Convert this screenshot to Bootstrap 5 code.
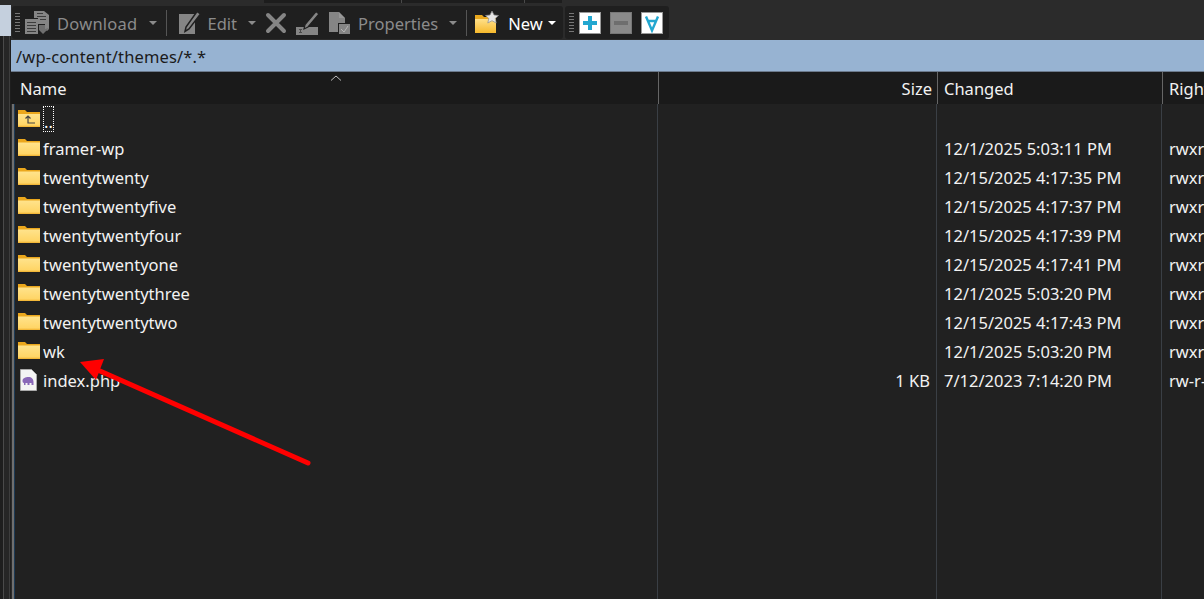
<!DOCTYPE html>
<html lang="en">
<head>
<meta charset="utf-8">
<title>Remote files</title>
<link href="https://cdn.jsdelivr.net/npm/bootstrap@5.3.0/dist/css/bootstrap.min.css" rel="stylesheet">
<style>
html,body{height:100%;margin:0}
body{background:#2b2b2b;font-family:"Noto Sans","Open Sans",sans-serif;font-size:16.5px;overflow:hidden;color:#f2f2f2}
.shell{height:599px;position:relative}
.rail{width:11px;flex:none}
.rail-top{height:31px;margin-top:5px;background:#c5d0de}
.rail-low{flex:1;background:linear-gradient(90deg,#1e1e1e 0 3px,#4a4a4a 3px 4px,#262626 4px 9px,#3d3d3d 9px 10px,#1e1e1e 10px)}
.topstrip{height:6px}
.ts-a{width:253px;height:3px}
.ts-b{width:138px;height:3px;background:#1d1d1d;border-right:1px solid #4a4a4a}
.ts-c{width:123px;height:3px;background:#1d1d1d;border-right:1px solid #4a4a4a}
.ts-d{width:37px;height:3px;background:#1d1d1d}
.tool-row{height:34px;gap:2px;padding-left:1px}
.panel{background:#1f1f1f;border-radius:3px;height:33px}
.panel-a{width:551px;padding-left:3px}
.panel-b{width:104px;padding-left:4px}
.grip{width:5px;height:20px;flex:none;background:repeating-linear-gradient(#777 0 1px,transparent 1px 3px)}
.ttext{color:#8b8b8b;line-height:1;margin-top:3px}
.ttext-wide{letter-spacing:.25px}
.ttext-on{color:#fff}
.caret-s{width:0;height:0;border-left:4px solid transparent;border-right:4px solid transparent;border-top:4px solid #8b8b8b;flex:none}
.caret-on{border-top-color:#fff}
.vsep{width:1px;height:26px;background:#555;flex:none}
.ml5{margin-left:5px}.ml7{margin-left:7px}.ml8{margin-left:8px}.ml9{margin-left:9px}.ml11{margin-left:11px}.ml12{margin-left:12px}
.pathbar{height:32px;background:#97b3d2;color:#1a1a1a;padding-left:5px;line-height:34px;border-bottom:1px solid #6c7a8c;letter-spacing:.15px}
.headrow{height:32px;background:#1a1a1a;line-height:34px;position:relative}
.listwrap{flex:1;margin-left:1px;border-left:2px solid #6f6f6f;display:flex;min-height:0}
.listbody{flex:1;background:#212121;border-left:1px solid #1d3a55;min-width:0}
.lrow{height:29px;line-height:31px;white-space:nowrap}
.lfill{flex:1}
.cn{width:643px;flex:none;padding-left:3px;display:flex;align-items:center;gap:3px;border-right:1px solid #3a3f45}
.cn>span{margin-top:2px}
.cs{width:279px;flex:none;text-align:right;padding-right:6px;border-right:1px solid #3a3f45}
.cc{width:225px;flex:none;padding-left:7px;border-right:1px solid #3a3f45}
.cr{flex:1;padding-left:7px;overflow:hidden}
.hn{width:648px;padding-left:9px;border-right:1px solid #666;flex:none}
.hs{width:279px;text-align:right;padding-right:5px;border-right:1px solid #666;flex:none}
.hc{width:225px;padding-left:6px;border-right:1px solid #666;flex:none}
.hr{flex:1;padding-left:6px;overflow:hidden}
.sortup{position:absolute;left:319px;top:3px}
.cn>.dots{outline:1px dotted #fff;outline-offset:-1px;display:inline-block;width:11px;height:26px;line-height:31px;padding-left:1px;color:#fff;margin-top:0}
.arrowlay{position:absolute;left:0;top:0;pointer-events:none}
</style>
</head>
<body>
<div class="shell d-flex">
  <div class="rail d-flex flex-column">
    <div class="rail-top"></div>
    <div class="rail-low"></div>
  </div>
  <div class="d-flex flex-column flex-grow-1" style="min-width:0">
    <div class="topstrip d-flex"><div class="ts-a"></div><div class="ts-b"></div><div class="ts-c"></div><div class="ts-d"></div></div>
    <div class="tool-row d-flex">
      <div class="panel panel-a d-flex align-items-center">
        <span class="grip"></span>
        <svg class="ml5" width="25" height="25" viewBox="0 0 25 25"><path fill="#858585" d="M9 1h10l5 4v14l-2 2-2-2V14h-7V8H9z"/><path fill="#858585" d="M0 9h13v15H0z"/><path fill="#3c3c3c" d="M2 12h9v1H2zm0 3h9v1H2zm0 3h9v1H2zm0 3h9v1H2zM12 3h6v1h-6zm0 3h9v1h-9zm3 3h6v1h-6z"/><path fill="#6f6f6f" d="M14 15h6v4l4-1-6 6-4-4z"/></svg>
        <span class="ttext ttext-wide ml7">Download</span>
        <span class="caret-s ml11"></span>
        <span class="vsep ml9"></span>
        <svg class="ml12" width="22" height="24" viewBox="0 0 22 24"><path fill="#858585" d="M0 3h16v20H0z"/><path fill="#858585" stroke="#1f1f1f" stroke-width="1.500" d="M18 .5l3.500 2.500L10 18l-4 2.500 1-4.500z"/></svg>
        <span class="ttext ml7">Edit</span>
        <span class="caret-s ml11"></span>
        <svg class="ml9" width="22" height="22" viewBox="0 0 22 22"><path stroke="#858585" stroke-width="4" stroke-linecap="round" d="M3 3l16 16M19 3L3 19"/></svg>
        <svg class="ml9" width="24" height="24" viewBox="0 0 24 24"><path fill="#858585" d="M0 16h22v8H0z"/><path fill="#4a4a4a" d="M3 18h3v1H5v2h1v1H3v-1h1v-2H3z"/><path fill="#858585" stroke="#1f1f1f" stroke-width="1.200" d="M20 .5l3 2.500-11 13-4 2 1-4.500z"/></svg>
        <svg class="ml9" width="22" height="24" viewBox="0 0 22 24"><path fill="#858585" d="M0 1h10l6 6v14H0z"/><path fill="#bbb" opacity=".35" d="M10 1l6 6h-6z"/><rect x="9.500" y="12.500" width="12" height="11" fill="#858585" stroke="#1f1f1f"/><path d="M12 18l3 3 4-6" stroke="#b5b5b5" stroke-width="1" fill="none"/></svg>
        <span class="ttext ml7">Properties</span>
        <span class="caret-s ml11"></span>
        <span class="vsep ml9"></span>
        <svg class="ml8" width="24" height="24" viewBox="0 0 24 24"><defs><linearGradient id="gn" x1="0" y1="0" x2="0" y2="1"><stop offset="0" stop-color="#ffe08a"/><stop offset="1" stop-color="#f6b92c"/></linearGradient></defs><path fill="#e9a81e" d="M0 4h7l2 2h12v16H0z"/><path fill="url(#gn)" d="M0 8h21v14H0z"/><path fill="#e6e6e6" stroke="#8d8d8d" stroke-width=".7" d="M17 0l2 4 4.500.5-3.300 3 1 4.500-4.200-2.300-4.200 2.300 1-4.500-3.300-3 4.500-.5z"/></svg>
        <span class="ttext ttext-on ml9">New</span>
        <span class="caret-s caret-on ml5"></span>
      </div>
      <div class="panel panel-b d-flex align-items-center">
        <span class="grip"></span>
        <svg class="ml5" width="22" height="22" viewBox="0 0 22 22"><rect x=".5" y=".5" width="21" height="21" fill="#fff" stroke="#999"/><path fill="#22a7d0" d="M9 4h4v5h5v4h-5v5H9v-5H4V9h5z"/></svg>
        <svg class="ml9" width="22" height="22" viewBox="0 0 22 22"><rect x=".5" y=".5" width="21" height="21" fill="#8a8a8a" stroke="#777"/><rect x="4" y="9" width="14" height="4" fill="#6e6e6e"/></svg>
        <svg class="ml9" width="22" height="22" viewBox="0 0 22 22"><rect x=".5" y=".5" width="21" height="21" fill="#fff" stroke="#999"/><path fill="none" stroke="#22a7d0" stroke-width="2.400" d="M5 4.500l6 14 6-14M7 9h8"/></svg>
      </div>
    </div>
    <div class="pathbar">/wp-content/themes/*.*</div>
    <div class="headrow d-flex">
      <div class="hn">Name</div>
      <div class="hs">Size</div>
      <div class="hc">Changed</div>
      <div class="hr">Rights</div>
      <svg class="sortup" width="12" height="6" viewBox="0 0 12 6"><path d="M1 5.500l5-4.500 5 4.500" fill="none" stroke="#bbb"/></svg>
    </div>
    <div class="listwrap">
    <div class="listbody d-flex flex-column">
      <div class="lrow d-flex">
        <div class="cn">
          <svg width="22" height="17" viewBox="0 0 22 17"><path fill="#eba71c" d="M0 0h7l2 2h13v15H0z"/><path fill="url(#gf)" d="M0 4h22v13H0z"/><path d="M10 6v7h7M7.500 8.500L10 6l2.500 2.500" stroke="#444" stroke-width="1.200" fill="none"/></svg>
          <span class="dots">..</span>
        </div>
        <div class="cs"></div><div class="cc"></div><div class="cr"></div>
      </div>
      <div class="lrow d-flex"><div class="cn"><svg width="22" height="17" viewBox="0 0 22 17"><use href="#fold"/></svg><span>framer-wp</span></div><div class="cs"></div><div class="cc">12/1/2025 5:03:11 PM</div><div class="cr">rwxr-xr-x</div></div>
      <div class="lrow d-flex"><div class="cn"><svg width="22" height="17" viewBox="0 0 22 17"><use href="#fold"/></svg><span>twentytwenty</span></div><div class="cs"></div><div class="cc">12/15/2025 4:17:35 PM</div><div class="cr">rwxr-xr-x</div></div>
      <div class="lrow d-flex"><div class="cn"><svg width="22" height="17" viewBox="0 0 22 17"><use href="#fold"/></svg><span>twentytwentyfive</span></div><div class="cs"></div><div class="cc">12/15/2025 4:17:37 PM</div><div class="cr">rwxr-xr-x</div></div>
      <div class="lrow d-flex"><div class="cn"><svg width="22" height="17" viewBox="0 0 22 17"><use href="#fold"/></svg><span>twentytwentyfour</span></div><div class="cs"></div><div class="cc">12/15/2025 4:17:39 PM</div><div class="cr">rwxr-xr-x</div></div>
      <div class="lrow d-flex"><div class="cn"><svg width="22" height="17" viewBox="0 0 22 17"><use href="#fold"/></svg><span>twentytwentyone</span></div><div class="cs"></div><div class="cc">12/15/2025 4:17:41 PM</div><div class="cr">rwxr-xr-x</div></div>
      <div class="lrow d-flex"><div class="cn"><svg width="22" height="17" viewBox="0 0 22 17"><use href="#fold"/></svg><span>twentytwentythree</span></div><div class="cs"></div><div class="cc">12/1/2025 5:03:20 PM</div><div class="cr">rwxr-xr-x</div></div>
      <div class="lrow d-flex"><div class="cn"><svg width="22" height="17" viewBox="0 0 22 17"><use href="#fold"/></svg><span>twentytwentytwo</span></div><div class="cs"></div><div class="cc">12/15/2025 4:17:43 PM</div><div class="cr">rwxr-xr-x</div></div>
      <div class="lrow d-flex"><div class="cn"><svg width="22" height="17" viewBox="0 0 22 17"><use href="#fold"/></svg><span>wk</span></div><div class="cs"></div><div class="cc">12/1/2025 5:03:20 PM</div><div class="cr">rwxr-xr-x</div></div>
      <div class="lrow d-flex"><div class="cn"><svg width="22" height="22" viewBox="0 0 22 22"><path fill="#f4f4f4" stroke="#aaa" d="M2.500.5h11l5 5v16h-16z"/><path fill="#8a68b8" d="M4.500 12c0-3 3-4 6-4 3 0 5 2 5 5v3h-2v-2h-2v2h-2v-2h-2v2h-1.500v-2c-1 0-1.500-1-1.500-2z"/></svg><span>index.php</span></div><div class="cs">1 KB</div><div class="cc">7/12/2023 7:14:20 PM</div><div class="cr">rw-r--r--</div></div>
      <div class="lfill d-flex"><div class="cn"></div><div class="cs"></div><div class="cc"></div><div class="cr"></div></div>
    </div>
    </div>
  </div>
  <svg width="0" height="0" class="position-absolute"><defs><linearGradient id="gf" x1="0" y1="0" x2="0" y2="1"><stop offset="0" stop-color="#ffe38c"/><stop offset=".85" stop-color="#ffd566"/><stop offset="1" stop-color="#efae2a"/></linearGradient><g id="fold"><path fill="#eba71c" d="M0 0h7l2 2h13v15H0z"/><path fill="url(#gf)" d="M0 3.500h22v13.500H0z"/></g></defs></svg>
  <svg class="arrowlay" width="1204" height="599" viewBox="0 0 1204 599"><path d="M308 463L100 371" stroke="#f00" stroke-width="5" stroke-linecap="round"/><path fill="#f00" d="M80 362l24-3-8 21z"/></svg>
</div>
</body>
</html>
